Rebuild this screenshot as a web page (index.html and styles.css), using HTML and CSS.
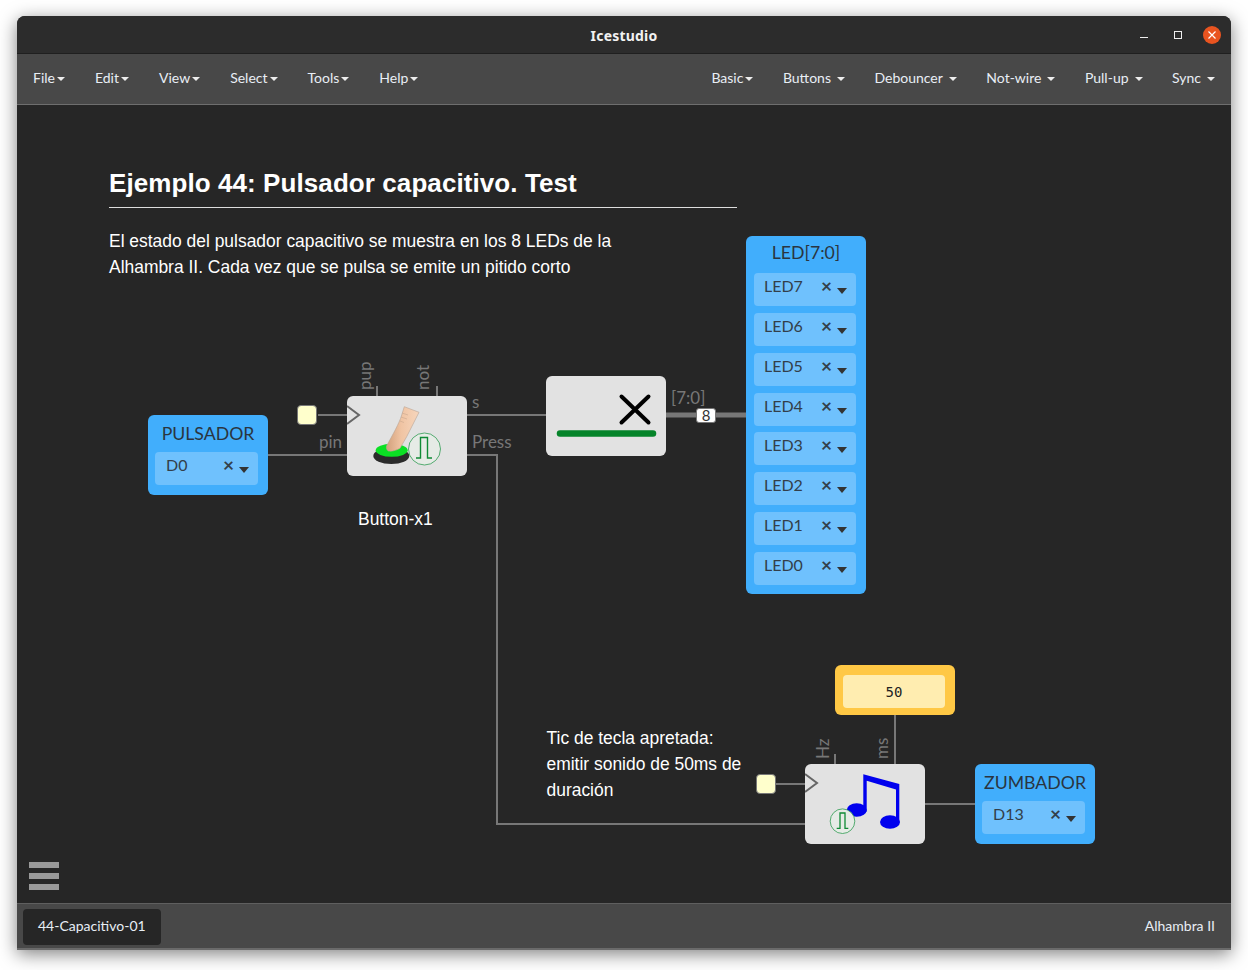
FILE: index.html
```html
<html>

<head>
  <title>Icestudio</title>
  <link rel="stylesheet" href="styles.css">
</head>

<body>
  <div id="window">
    <div id="titlebar">
      <span class="title">Icestudio</span>
      <div class="winbuttons">
        <svg class="winmin" width="12" height="12" viewBox="0 0 12 12"><path d="M2 8.500h8" stroke="#eee" stroke-width="1"/></svg>
        <svg width="12" height="12" viewBox="0 0 12 12"><rect x="2.500" y="2.500" width="7" height="7" fill="none" stroke="#eee" stroke-width="1"/></svg>
        <svg width="18" height="18" viewBox="0 0 18 18"><circle cx="9" cy="9" r="9" fill="#e95420"/><path d="M5.500 5.500l7 7M12.500 5.500l-7 7" stroke="#fff" stroke-width="1.200"/></svg>
      </div>
    </div>

    <div id="menubar">
      <div class="menu">
        <span class="item">File<i class="caret"></i></span>
        <span class="item">Edit<i class="caret"></i></span>
        <span class="item">View<i class="caret"></i></span>
        <span class="item">Select<i class="caret"></i></span>
        <span class="item">Tools<i class="caret"></i></span>
        <span class="item">Help<i class="caret"></i></span>
      </div>
      <div class="menu right">
        <span class="item">Basic<i class="caret"></i></span>
        <span class="item wide">Buttons<i class="caret"></i></span>
        <span class="item wide">Debouncer<i class="caret"></i></span>
        <span class="item wide">Not-wire<i class="caret"></i></span>
        <span class="item wide">Pull-up<i class="caret"></i></span>
        <span class="item wide">Sync<i class="caret"></i></span>
      </div>
    </div>

    <div id="canvas">
      <!-- wires: viewBox uses the screenshot's coordinates -->
      <svg id="wires" width="1214" height="798" viewBox="17 105 1214 798">
        <g fill="none" stroke="#777" stroke-width="2">
          <path d="M318 415H347M268 455H347M377 386V396M437 386V396"/>
          <path d="M467 415H546M467 455H497V824H805"/>
          <path d="M776 784H805M835 754V764M895 715V764M925 804H975"/>
          <path d="M666 415H746" stroke-width="5"/>
        </g>
        <g class="port">
          <text x="319" y="448">pin</text>
          <text x="472" y="408">s</text>
          <text x="472" y="448">Press</text>
          <text x="671" y="404">[7:0]</text>
          <text transform="translate(371 390) rotate(-90)">pup</text>
          <text transform="translate(429 390) rotate(-90)">not</text>
          <text transform="translate(829 759) rotate(-90)">Hz</text>
          <text transform="translate(888 759) rotate(-90)">ms</text>
        </g>
      </svg>

      <h1 class="heading">Ejemplo 44: Pulsador capacitivo. Test</h1>
      <p class="note note-intro">El estado del pulsador capacitivo se muestra en los 8 LEDs de la<br>Alhambra II. Cada vez que se pulsa se emite un pitido corto</p>
      <p class="note note-name">Button-x1</p>
      <p class="note note-tic">Tic de tecla apretada:<br>emitir sonido de 50ms de<br>duración</p>

      <div class="clock clock-a"></div>
      <div class="clock clock-b"></div>

      <div class="block pin" id="pulsador">
        <div class="pin-title">PULSADOR</div>
        <div class="sel"><span class="sel-name">D0</span><span class="sel-x">×</span><i class="sel-caret"></i></div>
      </div>

      <div class="block gate" id="button">
        <svg width="120" height="80" viewBox="0 0 120 80">
          <defs>
            <linearGradient id="finger" x1="0" y1="0" x2="1" y2="0">
              <stop offset="0" stop-color="#d2a07c"/>
              <stop offset=".45" stop-color="#f0c4a3"/>
              <stop offset="1" stop-color="#f6d6bd"/>
            </linearGradient>
          </defs>
          <path d="M0 10L12 19L0 28" fill="none" stroke="#666" stroke-width="2"/>
          <ellipse cx="44.300" cy="60" rx="18" ry="8" fill="#2b2b2b"/>
          <ellipse cx="44.700" cy="54.300" rx="16" ry="6.500" fill="#0be024"/>
          <path d="M57.300 10.700L72 16.300L59.700 40.700L53 52.300C49 54.500 45 55.500 41.300 55C39.500 54 39 51.500 39.700 49.700C46 38 52 28 54.700 19Z" fill="url(#finger)" stroke="#b9a595" stroke-width=".6"/>
          <path d="M55 17l6 2M54 21l6 2M53 25l4 1.500" stroke="#c9a78e" stroke-width=".6"/>
          <circle cx="77.500" cy="53" r="16" fill="#e6ebe6" stroke="#2f9a52" stroke-width=".8"/>
          <path d="M69 62H73.500V41.500H80.500V62H85" fill="none" stroke="#0f8a35" stroke-width="1.400"/>
        </svg>
      </div>

      <div class="block gate" id="notgate">
        <svg width="120" height="80" viewBox="0 0 120 80">
          <path d="M75.500 20.500L102.500 46.500M102.500 20.500L75.500 46.500" stroke="#000" stroke-width="4" stroke-linecap="round"/>
          <path d="M14 57.500H107" stroke="#06842a" stroke-width="6.500" stroke-linecap="round"/>
        </svg>
      </div>

      <div class="busmark">8</div>

      <div class="block pin" id="leds">
        <div class="pin-title">LED[7:0]</div>
        <div class="sel"><span class="sel-name">LED7</span><span class="sel-x">×</span><i class="sel-caret"></i></div>
        <div class="sel"><span class="sel-name">LED6</span><span class="sel-x">×</span><i class="sel-caret"></i></div>
        <div class="sel"><span class="sel-name">LED5</span><span class="sel-x">×</span><i class="sel-caret"></i></div>
        <div class="sel"><span class="sel-name">LED4</span><span class="sel-x">×</span><i class="sel-caret"></i></div>
        <div class="sel"><span class="sel-name">LED3</span><span class="sel-x">×</span><i class="sel-caret"></i></div>
        <div class="sel"><span class="sel-name">LED2</span><span class="sel-x">×</span><i class="sel-caret"></i></div>
        <div class="sel"><span class="sel-name">LED1</span><span class="sel-x">×</span><i class="sel-caret"></i></div>
        <div class="sel"><span class="sel-name">LED0</span><span class="sel-x">×</span><i class="sel-caret"></i></div>
      </div>

      <div class="block constant" id="ms">
        <div class="const-value">50</div>
      </div>

      <div class="block gate" id="music">
        <svg width="120" height="80" viewBox="0 0 120 80">
          <path d="M0 10L12 19L0 28" fill="none" stroke="#666" stroke-width="2"/>
          <path d="M58.300 10.300L94.300 20V59.300H91V25.500L61.700 16.700V47.700H58.300Z" fill="#0000ee"/>
          <ellipse cx="51.700" cy="46" rx="10" ry="6.700" fill="#0000ee"/>
          <ellipse cx="85" cy="58" rx="10" ry="6.700" fill="#0000ee"/>
          <circle cx="37.500" cy="57.200" r="12.300" fill="#e6ebe6" stroke="#2f9a52" stroke-width=".8"/>
          <path d="M31.700 64.300H35V49H40V64.300H43.300" fill="none" stroke="#0f8a35" stroke-width="1.300"/>
        </svg>
      </div>

      <div class="block pin" id="zumbador">
        <div class="pin-title">ZUMBADOR</div>
        <div class="sel"><span class="sel-name">D13</span><span class="sel-x">×</span><i class="sel-caret"></i></div>
      </div>

      <div class="hamburger"><span></span><span></span><span></span></div>
    </div>

    <div id="footer">
      <span class="tab">44-Capacitivo-01</span>
      <span class="board">Alhambra II</span>
    </div>
  </div>
</body>

</html>
```

FILE: styles.css
```css
body {
  margin: 0;
  height: 970px;
  box-sizing: border-box;
  padding: 16px 17px 20px;
  background: #fff;
  font-family: 'Lato', sans-serif;
  overflow: hidden;
}

#window {
  display: flex;
  flex-direction: column;
  height: 934px;
  background: #262626;
  border-radius: 8px 8px 0 0;
  box-shadow: 0 4px 18px rgba(0, 0, 0, .5);
  overflow: hidden;
}

#titlebar {
  position: relative;
  flex: none;
  height: 38px;
  padding-top: 2px;
  display: flex;
  align-items: center;
  justify-content: center;
  background: #2c2c2c;
  border-bottom: 1px solid #1f1f1f;
  box-sizing: border-box;
}

.title {
  color: #f2f2f2;
  font-family: 'Noto Sans', sans-serif;
  font-size: 14px;
  font-weight: 700;
  letter-spacing: .2px;
}

.winbuttons {
  position: absolute;
  top: 10px;
  right: 10px;
  display: flex;
  align-items: center;
  gap: 19px;
}

.winmin {
  margin-right: 3px;
}

#menubar {
  flex: none;
  height: 51px;
  box-sizing: border-box;
  display: flex;
  justify-content: space-between;
  align-items: center;
  background: #484848;
  border-bottom: 1px solid #6e6e6e;
  padding: 0 16px 4px;
  color: #e8eef5;
  font-size: 14px;
}

.menu {
  display: flex;
  gap: 30px;
}

.menu.right {
  gap: 29.500px;
}

.item {
  display: flex;
  align-items: center;
}

.caret {
  margin: 4px 0 0 2px;
  border-top: 4px solid #eee;
  border-left: 4px solid transparent;
  border-right: 4px solid transparent;
}

.wide .caret {
  margin-left: 6px;
}

#canvas {
  position: relative;
  flex: 1;
  background: #262626;
  overflow: hidden;
}

#wires {
  position: absolute;
  top: 0;
  left: 0;
}

.port text {
  font-family: 'Lato', sans-serif;
  font-size: 17px;
  fill: #777;
}

.heading {
  position: absolute;
  left: 92px;
  top: 62px;
  width: 628px;
  margin: 0;
  padding-bottom: 8px;
  border-bottom: 1px solid #ddd;
  color: #fff;
  font-family: 'Liberation Sans', sans-serif;
  font-size: 26px;
  letter-spacing: .08px;
  line-height: 32px;
}

.note {
  position: absolute;
  margin: 0;
  color: #fff;
  font-family: 'Liberation Sans', sans-serif;
  font-size: 17.450px;
  line-height: 26px;
  white-space: nowrap;
}

.note-intro {
  left: 92px;
  top: 123px;
}

.note-name {
  left: 341px;
  top: 401px;
}

.note-tic {
  left: 529.500px;
  top: 620px;
}

.clock {
  position: absolute;
  width: 20px;
  height: 20px;
  box-sizing: border-box;
  background: #ffffcc;
  border: 1px solid #777;
  border-radius: 4px;
}

.clock-a {
  left: 280px;
  top: 300px;
}

.clock-b {
  left: 739px;
  top: 669px;
}

.block {
  position: absolute;
  width: 120px;
  box-sizing: border-box;
  border-radius: 6px;
}

.block svg {
  display: block;
}

.gate {
  height: 80px;
  background: #e2e2e2;
}

.pin {
  display: flex;
  flex-direction: column;
  gap: 7px;
  padding: 0 10px 0 7px;
  height: 80px;
  background: #41aefc;
  color: #2a3540;
}

.pin-title {
  height: 30px;
  line-height: 37px;
  font-size: 17.700px;
  text-align: center;
  white-space: nowrap;
  margin: 0 -10px 0 -7px;
}

.sel {
  display: flex;
  height: 33px;
  flex: none;
  box-sizing: border-box;
  padding: 3px 9px 0 11px;
  background: #6fc1fd;
  border-radius: 4px;
  font-size: 16px;
  color: #333f4a;
}

.sel-name {
  flex: 1;
}

.sel-x {
  margin-right: 5px;
  font-size: 19px;
  font-weight: 700;
  line-height: 20px;
}

.sel-caret {
  align-self: flex-start;
  margin-top: 12px;
  border-top: 6px solid #333;
  border-left: 5px solid transparent;
  border-right: 5px solid transparent;
}

#pulsador {
  left: 131px;
  top: 310px;
}

#button {
  left: 330px;
  top: 291px;
}

#notgate {
  left: 529px;
  top: 271px;
}

#leds {
  left: 729px;
  top: 131px;
  height: 358px;
  gap: 6.860px;
  padding: 0 10px 0 8px;
}

#leds .pin-title {
  height: 30.140px;
  line-height: 33px;
  margin: 0 -10px 0 -8px;
}

#leds .sel {
  padding-left: 10px;
}

#ms {
  left: 818px;
  top: 560px;
}

#music {
  left: 788px;
  top: 659px;
}

#zumbador {
  left: 958px;
  top: 659px;
}

.constant {
  height: 50px;
  padding: 10px 10px 7px 8px;
  background: #ffc845;
}

.const-value {
  height: 33px;
  line-height: 34px;
  border-radius: 4px;
  background: #ffedb0;
  color: #222;
  font-family: 'DejaVu Sans Mono', monospace;
  font-size: 14px;
  text-align: center;
}

.busmark {
  position: absolute;
  left: 679px;
  top: 303px;
  width: 20px;
  height: 15px;
  box-sizing: border-box;
  background: #fff;
  border: 1px solid #777;
  border-radius: 3px;
  color: #333;
  font-size: 15px;
  line-height: 13px;
  text-align: center;
}

.hamburger {
  position: absolute;
  left: 12px;
  top: 757px;
  display: flex;
  flex-direction: column;
  gap: 5px;
}

.hamburger span {
  display: block;
  width: 30px;
  height: 6px;
  background: #999;
}

#footer {
  flex: none;
  height: 47px;
  box-sizing: border-box;
  display: flex;
  justify-content: space-between;
  align-items: center;
  padding: 2px 16px 0 6px;
  background: #484848;
  border-top: 1px solid #5f5f5f;
  border-bottom: 2px solid #6a6a6a;
  color: #e8eef5;
  font-size: 14px;
}

.tab {
  padding: 0 15px;
  height: 36px;
  line-height: 34px;
  background: #262626;
  border-radius: 4px;
}

.board {
  padding-bottom: 4px;
}
```
